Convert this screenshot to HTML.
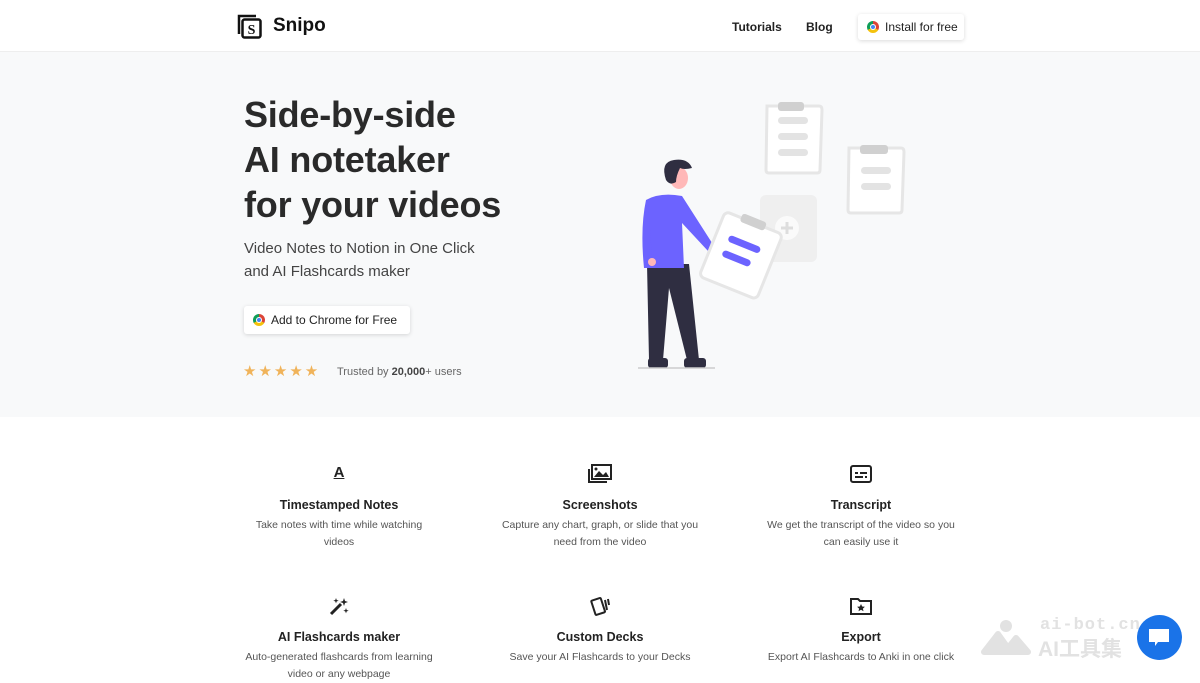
<!DOCTYPE html>
<html><head><meta charset="utf-8"><style>
*{margin:0;padding:0;box-sizing:border-box}
body{width:1200px;height:675px;overflow:hidden;background:#fff;font-family:"Liberation Sans",sans-serif;color:#222;position:relative}
.hdr{position:absolute;top:0;left:0;width:1200px;height:52px;background:#fff;border-bottom:1px solid #eee}
.hero{position:absolute;top:52px;left:0;width:1200px;height:365px;background:#f8f9fa}
.abs{position:absolute}
h1{position:absolute;left:244px;top:92px;font-size:36px;line-height:45px;font-weight:bold;color:#2a2a2a;letter-spacing:-0.2px}
.sub{left:244px;top:237px;font-size:15px;line-height:23px;color:#444}
.btn{background:#fff;box-shadow:0 1px 4px rgba(0,0,0,.15);border-radius:3px;font-size:12px;color:#222;display:flex;align-items:center}
.chrome{width:12px;height:12px;border-radius:50%;background:conic-gradient(#db4437 0 120deg,#f4c20d 120deg 240deg,#0f9d58 240deg 360deg);position:relative;margin-right:6px}
.chrome:after{content:"";position:absolute;left:3px;top:3px;width:6px;height:6px;border-radius:50%;background:#4285f4;border:1px solid #fff;box-sizing:border-box}
.feat{position:absolute;width:260px;text-align:center}
.feat .t{font-size:12.5px;font-weight:bold;color:#222;margin-top:14px}
.feat .d{font-size:10.5px;line-height:17px;color:#555;margin-top:5px}
.feat svg{display:block;margin:0 auto}
</style></head><body>
<div class="hdr"></div>
<svg class="abs" style="left:236px;top:13px" width="28" height="27"><path d="M3 21V3h17" fill="none" stroke="#111" stroke-width="2.5"/><rect x="6.5" y="6.5" width="18" height="18" rx="2" fill="#fff" stroke="#111" stroke-width="2.5"/><text x="15.5" y="21" text-anchor="middle" font-family="Liberation Serif" font-weight="bold" font-size="14" fill="#111">S</text></svg>
<div class="abs" style="left:273px;top:15px;font-size:19px;font-weight:bold;color:#111">Snipo</div>
<div class="abs" style="left:732px;top:20px;font-size:12px;font-weight:bold">Tutorials</div>
<div class="abs" style="left:806px;top:20px;font-size:12px;font-weight:bold">Blog</div>
<div class="abs btn" style="left:858px;top:14px;width:106px;height:26px;padding-left:9px"><span class="chrome"></span>Install for free</div>
<div class="hero"></div>
<h1>Side-by-side<br>AI notetaker<br>for your videos</h1>
<div class="abs sub">Video Notes to Notion in One Click<br>and AI Flashcards maker</div>
<div class="abs btn" style="left:244px;top:306px;width:166px;height:28px;padding-left:9px;font-size:12px"><span class="chrome"></span>Add to Chrome for Free</div>
<div class="abs" style="left:243px;top:362px;font-size:15px;color:#f0b35a;letter-spacing:2px">★★★★★</div>
<div class="abs" style="left:337px;top:366px;font-size:11px;color:#666">Trusted by <b style="color:#444">20,000</b>+ users</div>
<svg class="abs" style="left:620px;top:90px" width="300" height="290" viewBox="0 0 300 290">
<g fill="#fff" stroke="#e6e6e6" stroke-width="3">
<path d="M147 16h52q3 0 3 4l-2 60q0 3-3 3h-48q-3 0-3-3z"/>
<path d="M229 58h52q3 0 3 4l-2 58q0 3-3 3h-48q-3 0-3-3z"/>
</g>
<rect x="158" y="12" width="26" height="9" rx="3" fill="#d0d0d0"/>
<rect x="240" y="55" width="28" height="9" rx="3" fill="#d0d0d0"/>
<g fill="#e3e3e3"><rect x="158" y="27" width="30" height="7" rx="3.5"/><rect x="158" y="43" width="30" height="7" rx="3.5"/><rect x="158" y="59" width="30" height="7" rx="3.5"/><rect x="241" y="77" width="30" height="7" rx="3.5"/><rect x="241" y="93" width="30" height="7" rx="3.5"/></g>
<rect x="140" y="105" width="57" height="67" rx="6" fill="#efefef"/>
<circle cx="167" cy="138" r="12" fill="#fafafa"/><path d="M167 132v12M161 138h12" stroke="#ddd" stroke-width="3"/>
<path d="M27 174h42l10 96h-12l-18-72l-6 72h-14z" fill="#2f2e41"/>
<path d="M26 110q14-8 36-4l32 50l-6 5l-26-28l2 45h-40q-4-40 2-68z" fill="#6c63ff"/>
<path d="M28 112q-6 20-4 56h8z" fill="#6c63ff"/>
<circle cx="32" cy="172" r="4" fill="#ffb8b8"/><circle cx="93" cy="160" r="4" fill="#ffb8b8"/>
<ellipse cx="59" cy="88" rx="9" ry="11" fill="#ffb8b8"/>
<path d="M46 90q-6-18 8-20q14-2 18 8q-8 2-12 0q-4 8-4 14q-6 4-10-2z" fill="#2f2e41"/>
<rect x="28" y="268" width="20" height="10" rx="3" fill="#2f2e41"/><rect x="64" y="268" width="22" height="10" rx="3" fill="#2f2e41"/>
<line x1="18" y1="278" x2="95" y2="278" stroke="#ccc" stroke-width="1.5"/>
<g transform="rotate(22 120 165)"><rect x="90" y="130" width="62" height="70" rx="5" fill="#fff" stroke="#e6e6e6" stroke-width="3"/><rect x="107" y="125" width="26" height="9" rx="3" fill="#d0d0d0"/><rect x="103" y="150" width="34" height="7" rx="3.5" fill="#6c63ff"/><rect x="103" y="166" width="30" height="7" rx="3.5" fill="#6c63ff"/></g>
</svg>
<div class="feat" style="left:209px;top:464px"><div style="height:20px;font-size:15px;font-weight:bold;text-decoration:underline">A</div><div class="t">Timestamped Notes</div><div class="d">Take notes with time while watching<br>videos</div></div>
<div class="feat" style="left:470px;top:464px"><svg width="26" height="20"><rect x="5" y="1" width="19" height="14" fill="none" stroke="#222" stroke-width="2"/><path d="M2 5v13h18" fill="none" stroke="#222" stroke-width="2"/><path d="M7 13l5-6 4 4 3-3 3 5z" fill="#222"/><circle cx="9" cy="5" r="1.5" fill="#222"/></svg><div class="t">Screenshots</div><div class="d">Capture any chart, graph, or slide that you<br>need from the video</div></div>
<div class="feat" style="left:731px;top:464px"><svg width="24" height="20"><rect x="2" y="2" width="20" height="16" rx="2" fill="none" stroke="#222" stroke-width="2"/><path d="M6 9h3M11 9h7M6 13h8M16 13h2" stroke="#222" stroke-width="2"/></svg><div class="t">Transcript</div><div class="d">We get the transcript of the video so you<br>can easily use it</div></div>
<div class="feat" style="left:209px;top:596px"><svg width="24" height="20"><path d="M4 18l10-10" stroke="#222" stroke-width="3"/><path d="M17 2l1 3 3 1-3 1-1 3-1-3-3-1 3-1zM9 2l.7 2 2 .7-2 .7-.7 2-.7-2-2-.7 2-.7zM19 12l.7 2 2 .7-2 .7-.7 2-.7-2-2-.7 2-.7z" fill="#222"/></svg><div class="t">AI Flashcards maker</div><div class="d">Auto-generated flashcards from learning<br>video or any webpage</div></div>
<div class="feat" style="left:470px;top:596px"><svg width="24" height="20"><rect x="5" y="3" width="10" height="15" rx="1" transform="rotate(-18 10 10)" fill="none" stroke="#222" stroke-width="2"/><path d="M17 4l2 10M20 3l1 6" stroke="#222" stroke-width="2"/></svg><div class="t">Custom Decks</div><div class="d">Save your AI Flashcards to your Decks</div></div>
<div class="feat" style="left:731px;top:596px"><svg width="24" height="20"><path d="M2 3h7l2 2h11v13H2z" fill="none" stroke="#222" stroke-width="2"/><path d="M12 8l1.2 2.5 2.7.3-2 1.8.6 2.6-2.5-1.4-2.5 1.4.6-2.6-2-1.8 2.7-.3z" fill="#222"/></svg><div class="t">Export</div><div class="d">Export AI Flashcards to Anki in one click</div></div>
<div class="abs" style="left:1040px;top:616px;font:bold 17px 'Liberation Mono',monospace;color:#e2e2e2;letter-spacing:1px">ai-bot.cn</div>
<div class="abs" style="left:1038px;top:633px;font:bold 21px 'Liberation Sans','Noto Sans CJK SC',sans-serif;color:#e2e2e2">AI工具集</div>
<svg class="abs" style="left:980px;top:618px" width="52" height="38"><circle cx="26" cy="8" r="6" fill="#e2e2e2"/><path d="M4 34l14-18 10 14 8-10 12 14z" fill="#e2e2e2" stroke="#e2e2e2" stroke-width="6" stroke-linejoin="round"/></svg>
<div class="abs" style="left:1137px;top:615px;width:45px;height:45px;border-radius:50%;background:#1a73e8"></div>
<svg class="abs" style="left:1147px;top:627px" width="24" height="22"><path d="M2 2h20v13H11l-3 4v-4H2z" fill="#fff"/></svg>
</body></html>
